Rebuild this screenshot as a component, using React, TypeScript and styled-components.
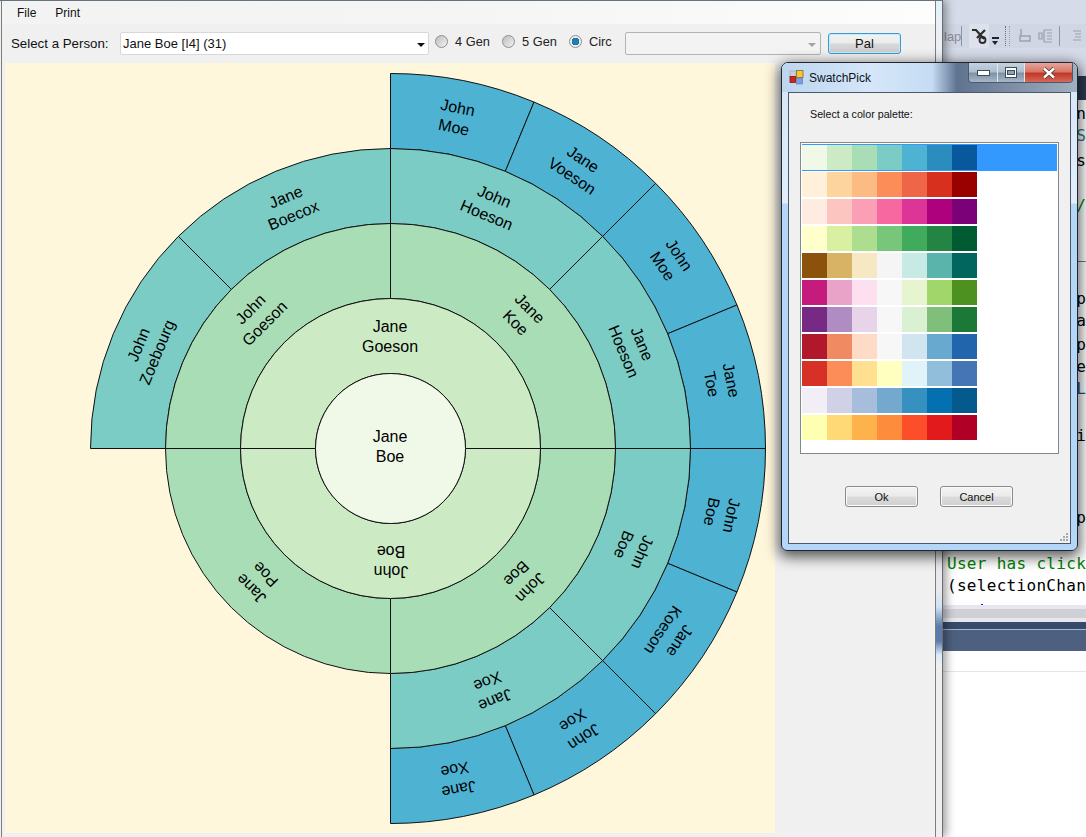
import React from 'react';
import styled, { createGlobalStyle } from 'styled-components';

const GlobalStyle = createGlobalStyle`
  html, body {
    margin: 0;
    padding: 0;
    overflow: hidden;
    background: #fff;
    font-family: "Liberation Sans", Arial, sans-serif;
  }
`;

const Desktop = styled.div`
  position: relative;
  width: 1086px;
  height: 837px;
  overflow: hidden;
`;

/* ---------- editor window behind ---------- */

const EditorWindow = styled.div`
  position: absolute;
  left: 943px;
  top: 0;
  width: 143px;
  height: 837px;
  display: flex;
  flex-direction: column;
  background: #fff;
`;

const EditorTopBar = styled.div`
  height: 24px;
  background: #d6dbe9;
`;

const EditorTools = styled.div`
  height: 24px;
  display: flex;
  align-items: center;
  background: #d0d6e4;
  color: #8a8f9c;
  font-size: 13px;
`;

const MapLabel = styled.span`
  width: 26px;
  text-align: left;
  font-size: 13px;
  padding-left: 1px;
  box-sizing: border-box;
`;

const ToolSeparator = styled.span`
  width: 1px;
  height: 20px;
  background: #8f949f;
  flex: none;
`;

const ToolActive = styled.span`
  display: flex;
  align-items: center;
  justify-content: center;
  width: 20px;
  height: 24px;
  margin-left: 7px;
  background: #dde1ec;
  flex: none;
`;

const OverflowArrow = styled.span`
  width: 7px;
  height: 8px;
  margin: 10px 3px 0 3px;
  border-top: 2px solid #1c2233;
  box-sizing: border-box;
  position: relative;
  flex: none;
  &::after {
    content: '';
    position: absolute;
    left: 0;
    top: 2px;
    border-left: 3.5px solid transparent;
    border-right: 3.5px solid transparent;
    border-top: 4px solid #1c2233;
  }
`;

const Gripper = styled.span`
  width: 3px;
  height: 20px;
  margin: 0 8px 0 3px;
  flex: none;
  border-left: 1px dotted #6a6f7c;
  border-right: 1px dotted #9a9faa;
`;

const ToolIcon = styled.svg<{ $left?: number }>`
  flex: none;
  margin: 0 7px 0 ${(p) => p.$left ?? 0}px;
`;

const EditorGap = styled.div`
  height: 28px;
  background: #d6dbe9;
`;

const EditorTabs = styled.div`
  height: 24px;
  background: #2b3a55;
`;

const CodeArea = styled.div`
  height: 505px;
  padding-left: 4px;
  overflow: hidden;
`;

const CodeLine = styled.pre<{ $color?: string; $gap?: number }>`
  margin: ${(p) => p.$gap ?? 0}px 0 0;
  height: 22px;
  line-height: 22px;
  font-family: "DejaVu Sans Mono", "Liberation Mono", monospace;
  font-size: 16px;
  letter-spacing: 0.3px;
  color: ${(p) => p.$color ?? '#000'};
`;

const CaretDot = styled.span`
  display: block;
  width: 2px;
  height: 2px;
  margin: 7px 0 0 34px;
  background: #1a1aff;
`;

const ScrollBand = styled.div`
  height: 17px;
  background: linear-gradient(#e6e6ec 0 4px, #ced0d5 4px 13px, #e6e6ec 13px);
`;

const OutputHeader = styled.div`
  height: 29px;
  background: linear-gradient(#364a6b 0 7px, #a9b6ca 7px 8px, #4e6080 8px);
`;

const OutputTabs = styled.div`
  height: 20px;
  border-bottom: 1px solid #e5e5e5;
`;

/* ---------- main window ---------- */

const MainWindow = styled.div`
  position: absolute;
  left: 0;
  top: 0;
  width: 943px;
  height: 837px;
  box-sizing: border-box;
  padding-left: 2px;
  display: flex;
  border-top: 1px solid #66757d;
  border-right: 1px solid #6d6d6d;
  background: #f0f0f0;
  box-shadow: 3px 0 9px rgba(0, 0, 0, 0.4);
  &::before {
    content: '';
    position: absolute;
    left: 1px;
    top: 0;
    bottom: 0;
    width: 1px;
    background: #7c7c7c;
  }
`;

const WindowBody = styled.div`
  width: 933px;
  display: flex;
  flex-direction: column;
  border-right: 1px solid #7d7d7d;
  flex: none;
`;

const SideFrame = styled.div`
  flex: 1;
  background: linear-gradient(
    #e4f1f7 0,
    #eef1f6 60px,
    #e9e9ee 590px,
    #cfe2f4 606px,
    #5c7bab 625px,
    #5c7bab 640px,
    #dcebf8 654px,
    #efefef 664px
  );
`;

const MenuBar = styled.div`
  height: 23px;
  display: flex;
  align-items: center;
  gap: 19px;
  padding-left: 15px;
  background: linear-gradient(90deg, #f3f3f3, #f5f5f5 50%, #fdfdfd);
  font-size: 12px;
  color: #111;
`;

const Toolbar = styled.div`
  height: 39px;
  box-sizing: border-box;
  display: flex;
  align-items: center;
  padding: 0 0 1px 9px;
  background: #f0f0f0;
  font-size: 13.3px;
  color: #111;
`;

const PersonLabel = styled.span`
  width: 109px;
  flex: none;
`;

const ComboBox = styled.div<{ $width: number; $disabled?: boolean }>`
  position: relative;
  width: ${(p) => p.$width}px;
  height: 23px;
  box-sizing: border-box;
  display: flex;
  align-items: center;
  padding-left: 2px;
  flex: none;
  font-size: 13px;
  border-radius: 2px;
  border: 1px solid ${(p) => (p.$disabled ? '#b4b4b4' : '#d8d8d8')};
  background: ${(p) => (p.$disabled ? '#f3f3f3' : '#fff')};
  &::after {
    content: '';
    position: absolute;
    right: ${(p) => (p.$disabled ? 4 : 3)}px;
    top: 10px;
    border-left: 4px solid transparent;
    border-right: 4px solid transparent;
    border-top: 4px solid ${(p) => (p.$disabled ? '#a4a4a4' : '#111')};
  }
`;

const RadioItem = styled.label<{ $width: number; $left?: number }>`
  display: flex;
  align-items: center;
  gap: 4px;
  width: ${(p) => p.$width}px;
  margin: 0 0 4px ${(p) => p.$left ?? 0}px;
  flex: none;
  font-size: 12.8px;
  color: #222;
`;

const RadioDot = styled.span<{ $checked?: boolean }>`
  width: 11px;
  height: 11px;
  border-radius: 50%;
  flex: none;
  margin-right: 3px;
  border: 1px solid #8e8f8f;
  background: ${(p) =>
    p.$checked
      ? 'radial-gradient(circle, #1f7fb5 0 3px, #0b4f7d 3.5px, #e8eef2 4px)'
      : 'linear-gradient(135deg, #bdbdbd, #f2f2f2)'};
`;

const PalButton = styled.button`
  width: 73px;
  height: 21px;
  margin-left: 7px;
  padding: 0;
  flex: none;
  border: 1px solid #3a9bd0;
  border-radius: 3px;
  box-shadow: inset 0 0 0 1px #c5ecfb;
  background: linear-gradient(#f3f3f3 0, #ebebeb 48%, #d8d8d8 52%, #cdcdcd 100%);
  font-family: inherit;
  font-size: 13px;
  color: #111;
`;

const ChartRow = styled.div`
  flex: 1;
  display: flex;
  padding-left: 3px;
`;

const ChartPanel = styled.div`
  width: 770px;
  height: 770px;
  background: #fff7dc;
`;

const ChartSvg = styled.svg`
  display: block;
  font-family: "Liberation Sans", Arial, sans-serif;
  font-size: 16px;
`;

/* ---------- palette dialog ---------- */

const Dialog = styled.div`
  position: absolute;
  left: 781px;
  top: 62px;
  width: 297px;
  height: 489px;
  box-sizing: border-box;
  display: flex;
  flex-direction: column;
  padding: 0 6px 6px;
  border: 1px solid #20262c;
  border-radius: 7px 7px 6px 6px;
  background: linear-gradient(#d5e6f7 0, #e2eefb 140px, #b4d6f8 141px, #b4d6f8 100%);
  box-shadow: 0 4px 14px 2px rgba(0, 0, 0, 0.65);
`;

const TitleBar = styled.div`
  position: relative;
  height: 29px;
  flex: none;
  margin: 0 -6px;
  padding-left: 7px;
  display: flex;
  align-items: center;
  gap: 5px;
  border-radius: 6px 6px 0 0;
  font-size: 12px;
  color: #0c1420;
  background: linear-gradient(
    90deg,
    #bcd6f0 0,
    #d5e6f8 90px,
    #c5dcf4 150px,
    #5f7390 175px,
    #75869e 215px,
    #9fb0c2 100%
  );
`;

const TitleButtons = styled.div`
  position: absolute;
  top: 0;
  right: 4px;
  height: 19px;
  display: flex;
  border: 1px solid #4a5a6a;
  border-top: none;
  border-radius: 0 0 4px 4px;
  overflow: hidden;
`;

const TitleButton = styled.span<{ $close?: boolean; $width: number }>`
  width: ${(p) => p.$width}px;
  display: flex;
  align-items: center;
  justify-content: center;
  border-left: 1px solid #dfe7ee;
  background: ${(p) =>
    p.$close
      ? 'linear-gradient(#e5a59b 0, #d9786a 45%, #bf3a25 55%, #d8675c 100%)'
      : 'linear-gradient(#c5d3e0 0, #aebfcf 45%, #7f93a8 55%, #a6b8c8 100%)'};
  &:first-child {
    border-left: none;
  }
`;

const ClientArea = styled.div`
  position: relative;
  flex: 1;
  display: flex;
  flex-direction: column;
  padding: 15px 12px 0 11px;
  border: 1px solid #4b5a68;
  background: #f0f0f0;
`;

const PromptLabel = styled.div`
  margin-left: 10px;
  font-size: 10.7px;
  height: 34px;
  color: #111;
`;

const ListBox = styled.div`
  width: 259px;
  height: 312px;
  box-sizing: border-box;
  padding: 1px;
  border: 1px solid #828790;
  background: #fff;
`;

const PaletteRow = styled.div<{ $selected?: boolean }>`
  display: flex;
  height: 25px;
  padding: 1px 0;
  background: ${(p) => (p.$selected ? '#3399ff' : 'transparent')};
`;

const Swatch = styled.span<{ $color: string }>`
  width: 25px;
  height: 25px;
  background: ${(p) => p.$color};
`;

const DialogButtons = styled.div`
  display: flex;
  gap: 22px;
  margin: 32px 0 0 45px;
`;

const DialogButton = styled.button`
  width: 73px;
  height: 21px;
  padding: 0;
  border: 1px solid #8a8a8a;
  border-radius: 3px;
  box-shadow: inset 0 0 0 1px #fafafa;
  background: linear-gradient(#f3f3f3 0, #ebebeb 48%, #dcdcdc 52%, #cfcfcf 100%);
  font-family: inherit;
  font-size: 11px;
  color: #111;
`;

const ResizeGrip = styled.svg`
  position: absolute;
  right: 1px;
  bottom: 1px;
`;

const GNBU = ['#f0f9e8', '#ccebc5', '#a8ddb5', '#7bccc4', '#4eb3d3', '#2b8cbe', '#08589e'];

const PALETTES = [
  GNBU,
  ['#fef0d9', '#fdd49e', '#fdbb84', '#fc8d59', '#ef6548', '#d7301f', '#990000'],
  ['#feebe2', '#fcc5c0', '#fa9fb5', '#f768a1', '#dd3497', '#ae017e', '#7a0177'],
  ['#ffffcc', '#d9f0a3', '#addd8e', '#78c679', '#41ab5d', '#238443', '#005a32'],
  ['#8c510a', '#d8b365', '#f6e8c3', '#f5f5f5', '#c7eae5', '#5ab4ac', '#01665e'],
  ['#c51b7d', '#e9a3c9', '#fde0ef', '#f7f7f7', '#e6f5d0', '#a1d76a', '#4d9221'],
  ['#762a83', '#af8dc3', '#e7d4e8', '#f7f7f7', '#d9f0d3', '#7fbf7b', '#1b7837'],
  ['#b2182b', '#ef8a62', '#fddbc7', '#f7f7f7', '#d1e5f0', '#67a9cf', '#2166ac'],
  ['#d73027', '#fc8d59', '#fee090', '#ffffbf', '#e0f3f8', '#91bfdb', '#4575b4'],
  ['#f1eef6', '#d0d1e6', '#a6bddb', '#74a9cf', '#3690c0', '#0570b0', '#045a8d'],
  ['#ffffb2', '#fed976', '#feb24c', '#fd8d3c', '#fc4e2a', '#e31a1c', '#b10026'],
];

// ring, start angle, end angle (degrees clockwise from top), first and last name
type Slice = [number, number, number, string, string];

const RING_WIDTH = 75;
const CENTER = 385.5;

const SLICES: Slice[] = [
  [4, 0, 22.5, 'John', 'Moe'],
  [4, 22.5, 45, 'Jane', 'Voeson'],
  [4, 45, 67.5, 'John', 'Moe'],
  [4, 67.5, 90, 'Jane', 'Toe'],
  [4, 90, 112.5, 'John', 'Boe'],
  [4, 112.5, 135, 'Jane', 'Koeson'],
  [4, 135, 157.5, 'John', 'Xoe'],
  [4, 157.5, 180, 'Jane', 'Xoe'],
  [3, 0, 45, 'John', 'Hoeson'],
  [3, 45, 90, 'Jane', 'Hoeson'],
  [3, 90, 135, 'John', 'Boe'],
  [3, 135, 180, 'Jane', 'Xoe'],
  [3, -45, 0, 'Jane', 'Boecox'],
  [3, -90, -45, 'John', 'Zoebourg'],
  [2, 0, 90, 'Jane', 'Koe'],
  [2, 90, 180, 'John', 'Boe'],
  [2, 180, 270, 'Jane', 'Poe'],
  [2, -90, 0, 'John', 'Goeson'],
  [1, -90, 90, 'Jane', 'Goeson'],
  [1, 90, 270, 'John', 'Boe'],
];

const polar = (r: number, deg: number) => {
  const a = (deg * Math.PI) / 180;
  return [CENTER + r * Math.sin(a), CENTER - r * Math.cos(a)];
};

const slicePath = (ring: number, a0: number, a1: number) => {
  const r0 = ring * RING_WIDTH;
  const r1 = r0 + RING_WIDTH;
  const [x0, y0] = polar(r0, a0);
  const [x1, y1] = polar(r1, a0);
  const [x2, y2] = polar(r1, a1);
  const [x3, y3] = polar(r0, a1);
  return `M${x0} ${y0}L${x1} ${y1}A${r1} ${r1} 0 0 1 ${x2} ${y2}L${x3} ${y3}A${r0} ${r0} 0 0 0 ${x0} ${y0}Z`;
};

const PersonName = ({ x, y, angle, first, last }: { x: number; y: number; angle: number; first: string; last: string }) => (
  <text transform={`translate(${x} ${y}) rotate(${angle})`} textAnchor="middle" fill="#000">
    <tspan x="-0.5" y="-4.5">{first}</tspan>
    <tspan x="-0.5" y="15.5">{last}</tspan>
  </text>
);

const FanChart = () => (
  <ChartSvg width="770" height="770" viewBox="0 0 770 770">
    {SLICES.map(([ring, a0, a1, first, last]) => {
      const mid = (a0 + a1) / 2;
      const [x, y] = polar((ring + 0.5) * RING_WIDTH, mid);
      return (
        <g key={`${ring}-${a0}`}>
          <path d={slicePath(ring, a0, a1)} fill={GNBU[ring]} stroke="#111" strokeWidth="1" />
          <PersonName x={x} y={y} angle={mid} first={first} last={last} />
        </g>
      );
    })}
    <circle cx={CENTER} cy={CENTER} r={RING_WIDTH} fill={GNBU[0]} stroke="#111" />
    <PersonName x={CENTER} y={CENTER - 2} angle={0} first="Jane" last="Boe" />
  </ChartSvg>
);

const CODE_LINES: { text: string; color?: string; gap?: number }[] = [
  { text: '             n', gap: 3 },
  { text: '             S', color: '#2b7a8c' },
  { text: '             s', gap: 3 },
  { text: '             /', color: '#008000', gap: 23 },
  { text: '             _', gap: 25 },
  { text: '             p', gap: 24 },
  { text: '             a' },
  { text: '             p', gap: 2 },
  { text: '             e' },
  { text: '             L', color: '#1c4f8a' },
  { text: '             i', gap: 25 },
  { text: '             p', gap: 60 },
  { text: 'User has click', color: '#008000', gap: 24 },
  { text: '(selectionChan' },
];

const App = () => (
  <Desktop>
    <GlobalStyle />
    <EditorWindow>
      <EditorTopBar />
      <EditorTools>
        <MapLabel>lap</MapLabel>
        <ToolSeparator />
        <ToolActive>
          <svg width="16" height="16" viewBox="0 0 16 16" fill="none" stroke="#2b2b2b" strokeWidth="2.2">
            <path d="M1 2h4l8 9M14 2 6 10" />
            <circle cx="11.5" cy="12" r="3" strokeWidth="1.8" />
          </svg>
        </ToolActive>
        <OverflowArrow />
        <Gripper />
        <ToolIcon width="13" height="16" viewBox="0 0 13 16" fill="none" stroke="#9a9fa9" strokeWidth="1.4">
          <rect x="2" y="8" width="10" height="5" />
          <path d="M3 1v6" />
        </ToolIcon>
        <ToolIcon width="14" height="16" viewBox="0 0 14 16" fill="none" stroke="#9a9fa9" strokeWidth="1.2">
          <path d="M6 2h8M9 5h5M9 8h5M9 11h5M6 14h8M6 2v12M1 5h3v6H1z" />
        </ToolIcon>
        <ToolSeparator />
        <ToolIcon $left={11} width="10" height="16" viewBox="0 0 10 16" fill="none" stroke="#9a9fa9" strokeWidth="1.2">
          <path d="M2 3h8M4 6h6M4 9h6M2 12h8" />
        </ToolIcon>
      </EditorTools>
      <EditorGap />
      <EditorTabs />
      <CodeArea>
        {CODE_LINES.map((line, i) => (
          <CodeLine key={i} $color={line.color} $gap={line.gap}>{line.text}</CodeLine>
        ))}
        <CaretDot />
      </CodeArea>
      <ScrollBand />
      <OutputHeader />
      <OutputTabs />
    </EditorWindow>

    <MainWindow>
      <WindowBody>
        <MenuBar>
          <span>File</span>
          <span>Print</span>
        </MenuBar>
        <Toolbar>
          <PersonLabel>Select a Person:</PersonLabel>
          <ComboBox $width={309}>Jane Boe [I4] (31)</ComboBox>
          <RadioItem $width={67} $left={6}>
            <RadioDot />
            4 Gen
          </RadioItem>
          <RadioItem $width={67}>
            <RadioDot />
            5 Gen
          </RadioItem>
          <RadioItem $width={56}>
            <RadioDot $checked />
            Circ
          </RadioItem>
          <ComboBox $width={196} $disabled />
          <PalButton>Pal</PalButton>
        </Toolbar>
        <ChartRow>
          <ChartPanel>
            <FanChart />
          </ChartPanel>
        </ChartRow>
      </WindowBody>
      <SideFrame />
    </MainWindow>

    <Dialog>
      <TitleBar>
        <svg width="15" height="15" viewBox="0 0 15 15">
          <rect x="1" y="1" width="6" height="6" fill="#c9ced6" stroke="#9aa2ad" strokeWidth="0.6" />
          <rect x="7.5" y="0.5" width="6.5" height="7" fill="#f6c43e" stroke="#8a6a1c" strokeWidth="0.8" />
          <rect x="1" y="6.5" width="5.5" height="6" fill="#d3231c" stroke="#7a1a15" strokeWidth="0.8" />
          <rect x="7.5" y="8.5" width="6" height="5.5" fill="#7d9de0" stroke="#5a72a8" strokeWidth="0.6" />
        </svg>
        SwatchPick
        <TitleButtons>
          <TitleButton $width={28}>
            <svg width="13" height="6" viewBox="0 0 13 6">
              <rect x="0.5" y="0.5" width="12" height="5" fill="#fff" stroke="#3e4c5a" />
            </svg>
          </TitleButton>
          <TitleButton $width={26}>
            <svg width="12" height="11" viewBox="0 0 12 11">
              <rect x="0.5" y="0.5" width="11" height="10" fill="#fff" stroke="#3e4c5a" />
              <rect x="2.5" y="3.5" width="7" height="4" fill="#8fa2b4" stroke="#3e4c5a" />
            </svg>
          </TitleButton>
          <TitleButton $close $width={47}>
            <svg width="14" height="12" viewBox="0 0 14 12">
              <path d="M2 1.5 12 10.5M12 1.5 2 10.5" stroke="#4a3030" strokeWidth="4" />
              <path d="M2 1.5 12 10.5M12 1.5 2 10.5" stroke="#fff" strokeWidth="2.4" />
            </svg>
          </TitleButton>
        </TitleButtons>
      </TitleBar>
      <ClientArea>
        <PromptLabel>Select a color palette:</PromptLabel>
        <ListBox>
          {PALETTES.map((palette, i) => (
            <PaletteRow key={i} $selected={i === 0}>
              {palette.map((color) => (
                <Swatch key={color} $color={color} />
              ))}
            </PaletteRow>
          ))}
        </ListBox>
        <DialogButtons>
          <DialogButton>Ok</DialogButton>
          <DialogButton>Cancel</DialogButton>
        </DialogButtons>
        <ResizeGrip width="10" height="10" viewBox="0 0 10 10" fill="#a8a8a8">
          <rect x="7" y="1" width="2" height="2" />
          <rect x="4" y="4" width="2" height="2" />
          <rect x="7" y="4" width="2" height="2" />
          <rect x="1" y="7" width="2" height="2" />
          <rect x="4" y="7" width="2" height="2" />
          <rect x="7" y="7" width="2" height="2" />
        </ResizeGrip>
      </ClientArea>
    </Dialog>
  </Desktop>
);

export default App;
